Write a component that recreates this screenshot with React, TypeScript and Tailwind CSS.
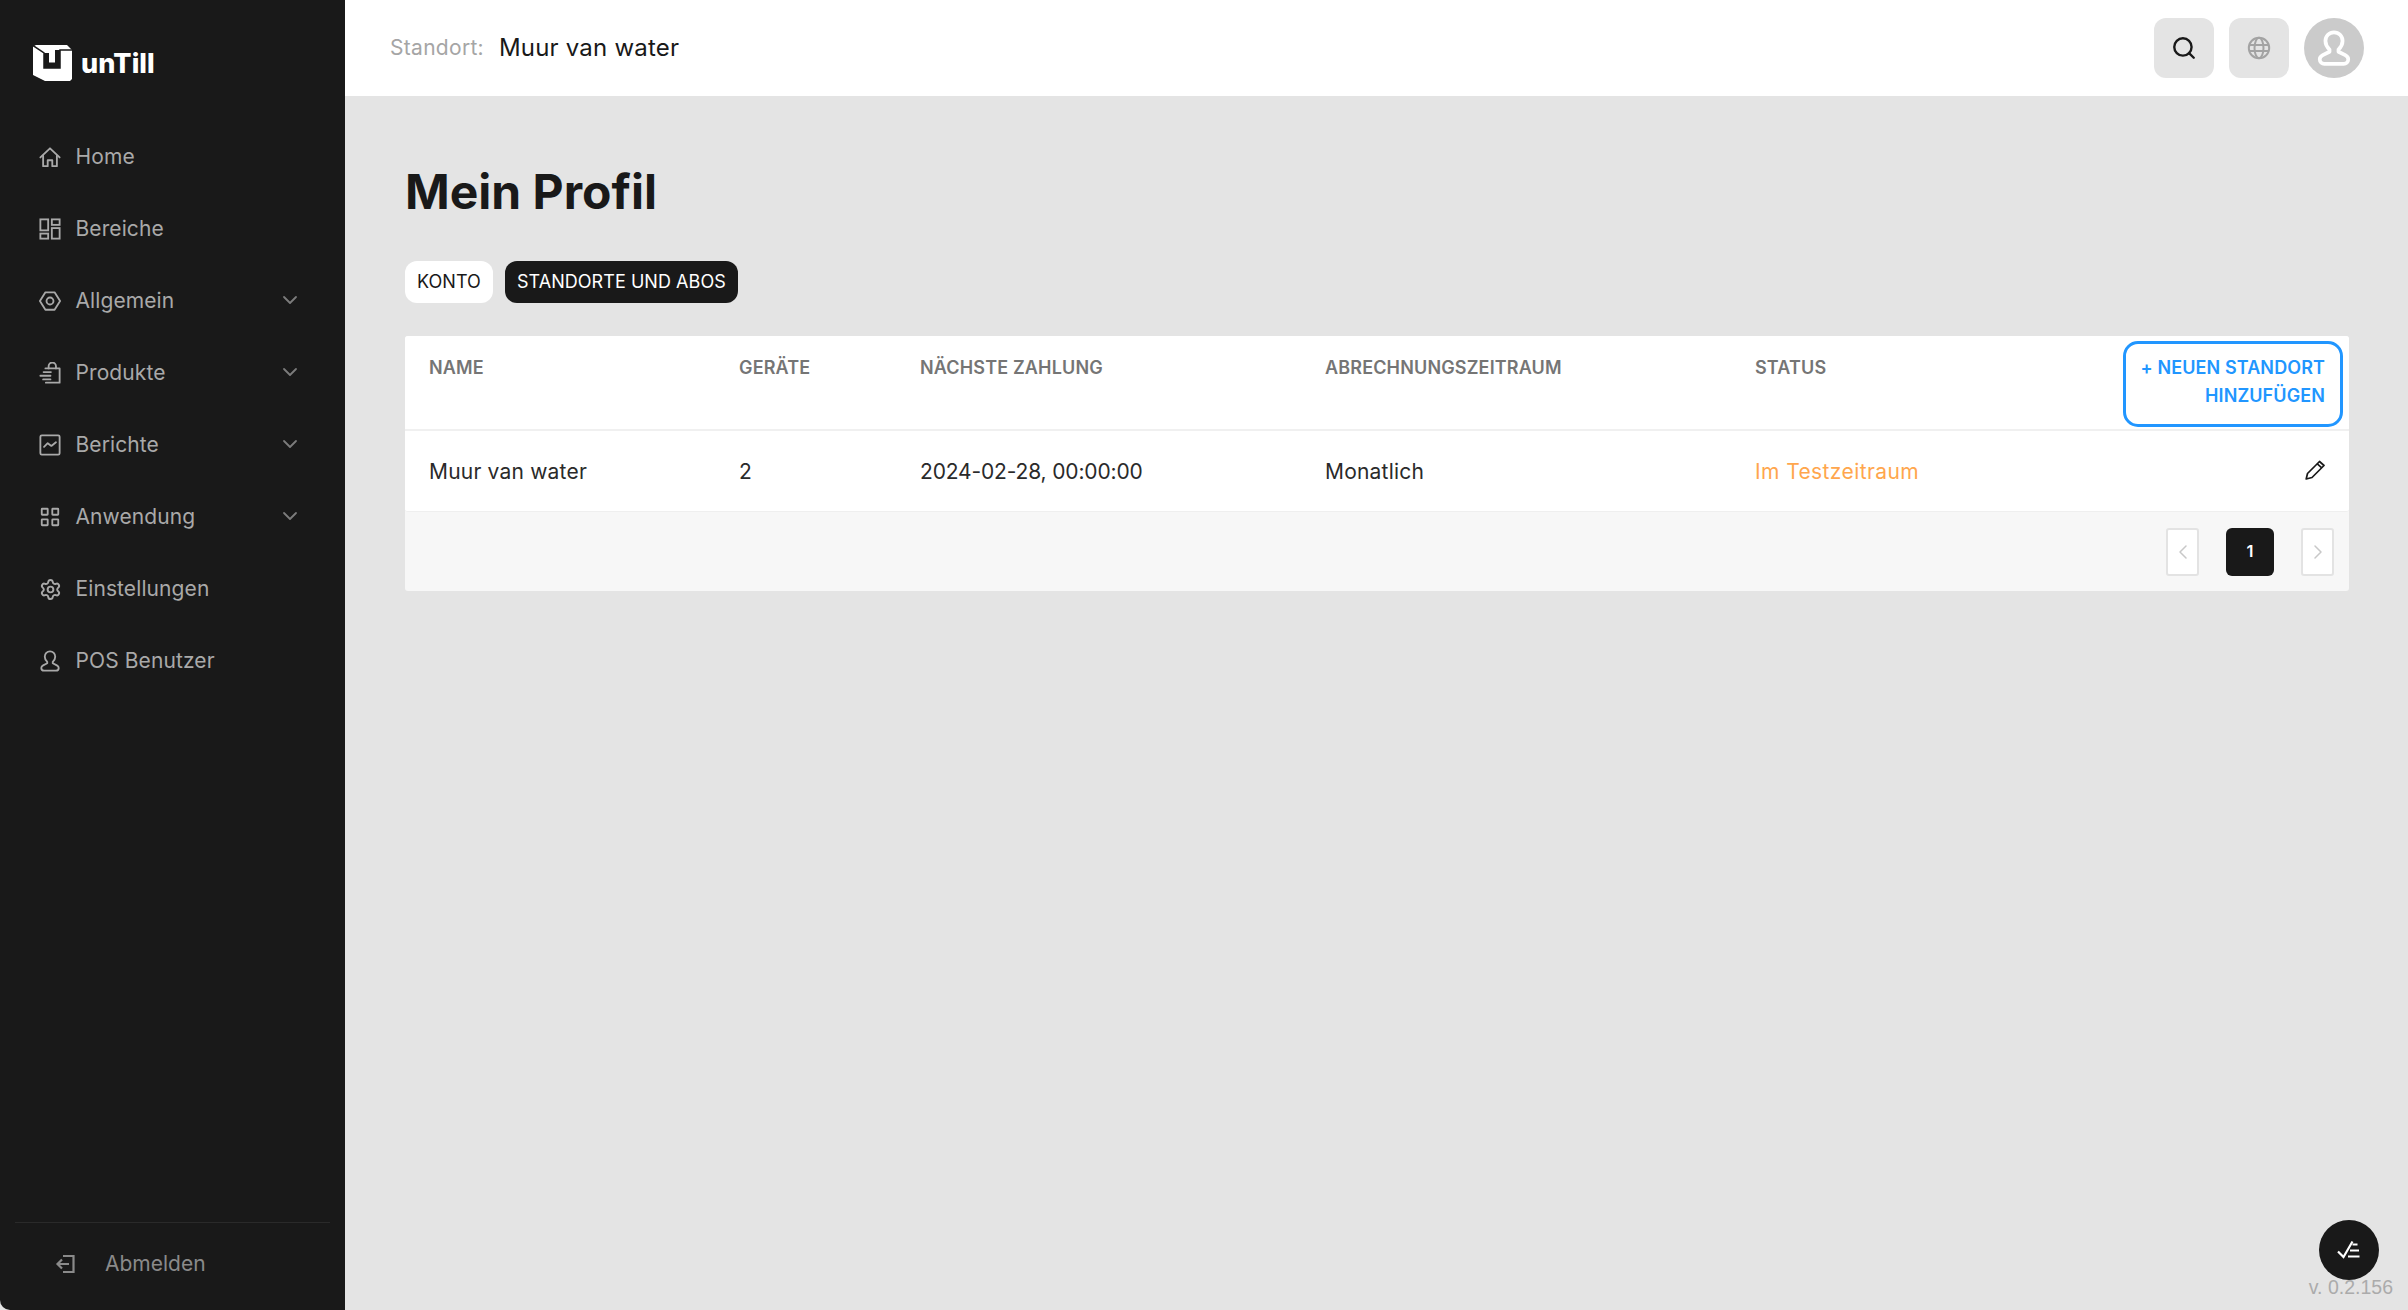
import type { ReactNode } from "react";
import { ChevronDown, ChevronLeft, ChevronRight, Search, Settings } from "lucide-react";

const ICON_PROPS = {
  width: 22,
  height: 22,
  viewBox: "0 0 24 24",
  fill: "none",
  stroke: "currentColor",
  strokeWidth: 2,
  strokeLinecap: "round" as const,
  strokeLinejoin: "round" as const,
};

function HomeIcon() {
  return (
    <svg {...ICON_PROPS}>
      <path d="M1.5 12.5 12 2.500l10.500 10" />
      <path d="M4.500 10.500V22h5v-6.500h5V22h5V10.500" />
    </svg>
  );
}

function AreasIcon() {
  return (
    <svg {...ICON_PROPS} strokeLinecap="square" strokeLinejoin="miter">
      <rect x="1.500" y="1.500" width="8.500" height="12" />
      <rect x="14" y="1.500" width="8.500" height="6" />
      <rect x="14" y="11" width="8.500" height="11.500" />
      <rect x="1.500" y="17" width="8.500" height="5.500" />
    </svg>
  );
}

function GeneralIcon() {
  return (
    <svg {...ICON_PROPS}>
      <path d="M7 2.500h10L23 12l-6 9.500H7L1 12z" />
      <circle cx="12" cy="12" r="3.800" />
    </svg>
  );
}

function ProductsIcon() {
  return (
    <svg {...ICON_PROPS}>
      <path d="M7 7h15.500v15.500H7.500" />
      <path d="M10.500 7V4.500a4 4 0 0 1 8 0V7" />
      <path d="M5 11h8M1.500 15h11M4.500 19h8" />
    </svg>
  );
}

function ReportsIcon() {
  return (
    <svg {...ICON_PROPS}>
      <rect x="1.500" y="1.500" width="21" height="21" rx="1.500" />
      <path d="m5.500 14 4-4 4 3 5-4" />
    </svg>
  );
}

function AppIcon() {
  return (
    <svg {...ICON_PROPS} strokeLinecap="square" strokeLinejoin="miter">
      <rect x="3" y="3" width="6.500" height="6.500" rx="0.500" />
      <rect x="14.500" y="3" width="6.500" height="6.500" rx="0.500" />
      <rect x="3" y="14.500" width="6.500" height="6.500" rx="0.500" />
      <rect x="14.500" y="14.500" width="6.500" height="6.500" rx="0.500" />
    </svg>
  );
}

function UserIcon({ size = 22, width = 2 }: { size?: number; width?: number }) {
  return (
    <svg {...ICON_PROPS} width={size} height={size} strokeWidth={width}>
      <path d="M12 1.500a5.700 5.700 0 0 0-5.700 5.800c0 2.300 1 4 2.700 5.700v1.500L4.500 16.800c-1.300.7-2 1.500-2 2.700 0 1.900 1.500 3 3 3h13c1.500 0 3-1.100 3-3 0-1.200-.7-2-2-2.700L15 14.500V13c1.700-1.700 2.700-3.400 2.700-5.700A5.700 5.700 0 0 0 12 1.500z" />
    </svg>
  );
}

function LogoutIcon() {
  return (
    <svg width="20" height="20" viewBox="0 0 20 20" fill="none" stroke="currentColor" strokeWidth="2.200">
      <path d="M8 2h10.500v16H8" />
      <path d="M14 10H3M7 5.500 2.500 10 7 14.500" />
    </svg>
  );
}

function GlobeIcon() {
  return (
    <svg width="24" height="24" viewBox="0 0 24 24" fill="none" stroke="currentColor" strokeWidth="2">
      <circle cx="12" cy="12" r="10.200" />
      <ellipse cx="12" cy="12" rx="4.500" ry="10.200" />
      <path d="M2 9h20M2 15h20" />
    </svg>
  );
}

function PencilIcon() {
  return (
    <svg width="20" height="20" viewBox="0 0 20 20" fill="none" stroke="currentColor" strokeWidth="1.700" strokeLinejoin="round">
      <path d="M14.500 1.500 19 5.500 7 17.500 1.200 19l1.300-5.500z" />
      <path d="m12.300 3.800 4.500 4" />
    </svg>
  );
}

function TaskIcon() {
  return (
    <svg width="24" height="20" viewBox="0 0 24 20" fill="none" stroke="currentColor" strokeWidth="2.200">
      <path d="M1 11.500 6.500 17 15.500 1.500" />
      <path d="M15.500 4.500h5M13 10.500h9M11 16.500h11.500" />
    </svg>
  );
}

function LogoMark() {
  return (
    <svg width="39" height="36" viewBox="0 0 39 36">
      <path fill="#fff" d="M3 0h31l5 5v29l-2 2H12L0 30V1.500z" />
      <path fill="none" stroke="#191919" strokeWidth="1.500" d="M0 .500 11 8v15h16V5h12" />
      <path fill="#191919" d="M11 8h5v9.500h6V5h5v18H11z" />
    </svg>
  );
}

type NavItem = { label: string; icon: ReactNode; expandable?: boolean };

const NAV_ITEMS: NavItem[] = [
  { label: "Home", icon: <HomeIcon /> },
  { label: "Bereiche", icon: <AreasIcon /> },
  { label: "Allgemein", icon: <GeneralIcon />, expandable: true },
  { label: "Produkte", icon: <ProductsIcon />, expandable: true },
  { label: "Berichte", icon: <ReportsIcon />, expandable: true },
  { label: "Anwendung", icon: <AppIcon />, expandable: true },
  { label: "Einstellungen", icon: <Settings size={23} strokeWidth={2} /> },
  { label: "POS Benutzer", icon: <UserIcon /> },
];

function Sidebar() {
  return (
    <aside className="flex h-full w-[345px] shrink-0 flex-col rounded-bl-[10px] bg-[#191919] text-[#a9a9a9]">
      <div className="flex h-[121px] items-start pl-[33px] pt-[45px]">
        <LogoMark />
        <span className="ml-[9px] mt-[3px] text-[27px] font-extrabold leading-[32px] text-white">unTill</span>
      </div>
      <nav className="flex flex-col">
        {NAV_ITEMS.map((item) => (
          <div className="flex h-[72px] items-center pl-[39px] pr-[43px]" key={item.label}>
            <span className="flex w-[36.500px] shrink-0">{item.icon}</span>
            <span className="flex-1 text-[21px] leading-[30px] tracking-[0.100px]">{item.label}</span>
            {item.expandable && <ChevronDown size={24} strokeWidth={1.800} className="-mt-[2px] text-[#7c7c7c]" />}
          </div>
        ))}
      </nav>
      <div className="mx-[15px] mt-auto flex h-[88px] items-center border-t border-[#2a2a2a] pl-[40px] pb-[5px] text-[#8a8a8a]">
        <LogoutIcon />
        <span className="ml-[30px] text-[21px]">Abmelden</span>
      </div>
    </aside>
  );
}

function Header() {
  return (
    <header className="flex h-[96px] shrink-0 items-center bg-white pl-[45px] pr-[44px]">
      <span className="text-[21px] tracking-[0.300px] text-[#a5a5a5]">Standort:</span>
      <span className="ml-[15px] text-[24px] tracking-[0.200px] text-[#191919]">Muur van water</span>
      <div className="ml-auto flex items-center gap-[15px]">
        <button className="flex size-[60px] items-center justify-center rounded-[12px] bg-[#e4e4e4] text-[#191919]">
          <Search size={26} strokeWidth={2.200} />
        </button>
        <button className="flex size-[60px] items-center justify-center rounded-[12px] bg-[#e4e4e4] text-[#a3a3a3]">
          <GlobeIcon />
        </button>
        <div className="flex size-[60px] items-center justify-center rounded-full bg-[#cbcbcb] text-white">
          <UserIcon size={36} width={2.500} />
        </div>
      </div>
    </header>
  );
}

const COLUMNS = ["NAME", "GERÄTE", "NÄCHSTE ZAHLUNG", "ABRECHNUNGSZEITRAUM", "STATUS"];
const ROW_GRID = "grid grid-cols-[310px_181px_405px_430px_1fr] pl-6";

function SitesTable() {
  return (
    <div className="mt-[33px] overflow-hidden rounded-[3px] bg-[#f7f7f7]">
      <div className="relative flex h-[95px] border-b-2 border-[#f0f0f0] bg-white">
        <div className={`${ROW_GRID} flex-1 pt-[20px] text-[18px] leading-[24px] font-semibold tracking-[0.150px] text-[#757575]`}>
          {COLUMNS.map((col) => (
            <span key={col}>{col}</span>
          ))}
        </div>
        <button className="mr-[6px] mt-[5px] h-[86px] w-[220px] shrink-0 rounded-[15px] border-[3px] border-[#2196ff] pr-[15px] pb-[5px] text-right text-[18px] leading-[27.500px] font-semibold tracking-[0.100px] text-[#2196ff]">
          + NEUEN STANDORT
          <br />
          HINZUFÜGEN
        </button>
      </div>
      <div className={`${ROW_GRID} h-[81px] items-center rounded-b-[3px] border-b border-[#efefef] bg-white pr-6 pt-[2px] text-[21px] tracking-[0.200px] text-[#2a2a2a]`}>
        <span>Muur van water</span>
        <span>2</span>
        <span className="tracking-[-0.150px]">2024-02-28, 00:00:00</span>
        <span>Monatlich</span>
        <div className="flex items-center justify-between">
          <span className="tracking-[0.400px] text-[#ffa64d]">Im Testzeitraum</span>
          <span className="-mt-[5px] text-[#191919]">
            <PencilIcon />
          </span>
        </div>
      </div>
      <div className="flex h-[79px] items-center justify-end pr-[15px]">
        <button className="flex h-[48px] w-[33px] items-center justify-center rounded-[3px] border-2 border-[#e3e3e3] bg-white text-[#c8c8c8]">
          <ChevronLeft size={24} strokeWidth={1.500} />
        </button>
        <span className="ml-[27px] flex h-[48px] w-[48px] items-center justify-center rounded-[6px] bg-[#191919] text-[16.500px] font-semibold text-white">
          1
        </span>
        <button className="ml-[27px] flex h-[48px] w-[33px] items-center justify-center rounded-[3px] border-2 border-[#e3e3e3] bg-white text-[#c8c8c8]">
          <ChevronRight size={24} strokeWidth={1.500} />
        </button>
      </div>
    </div>
  );
}

export default function App() {
  return (
    <div className="flex h-[1310px] w-[2408px] overflow-hidden bg-[#e4e4e4] font-['Inter',sans-serif]">
      <Sidebar />
      <div className="relative flex min-w-0 flex-1 flex-col">
        <Header />
        <main className="flex-1 pl-[60px] pr-[59px] pt-[67px]">
          <h1 className="text-[48px] font-bold leading-[58px] text-[#191919]">Mein Profil</h1>
          <div className="mt-[40px] flex gap-3 text-[18px] leading-[24px] tracking-[0.050px]">
            <span className="flex h-[42px] items-center rounded-[12px] bg-white px-3 text-[#191919]">KONTO</span>
            <span className="flex h-[42px] items-center rounded-[12px] bg-[#191919] px-3 text-white">STANDORTE UND ABOS</span>
          </div>
          <SitesTable />
        </main>
        <span className="absolute bottom-[12px] right-[15px] font-['Liberation_Sans',sans-serif] text-[19.500px] leading-[22px] text-[#ababab]">
          v. 0.2.156
        </span>
        <button className="absolute bottom-[30px] right-[29px] flex size-[60px] items-center justify-center rounded-full bg-[#191919] text-white">
          <TaskIcon />
        </button>
      </div>
    </div>
  );
}
